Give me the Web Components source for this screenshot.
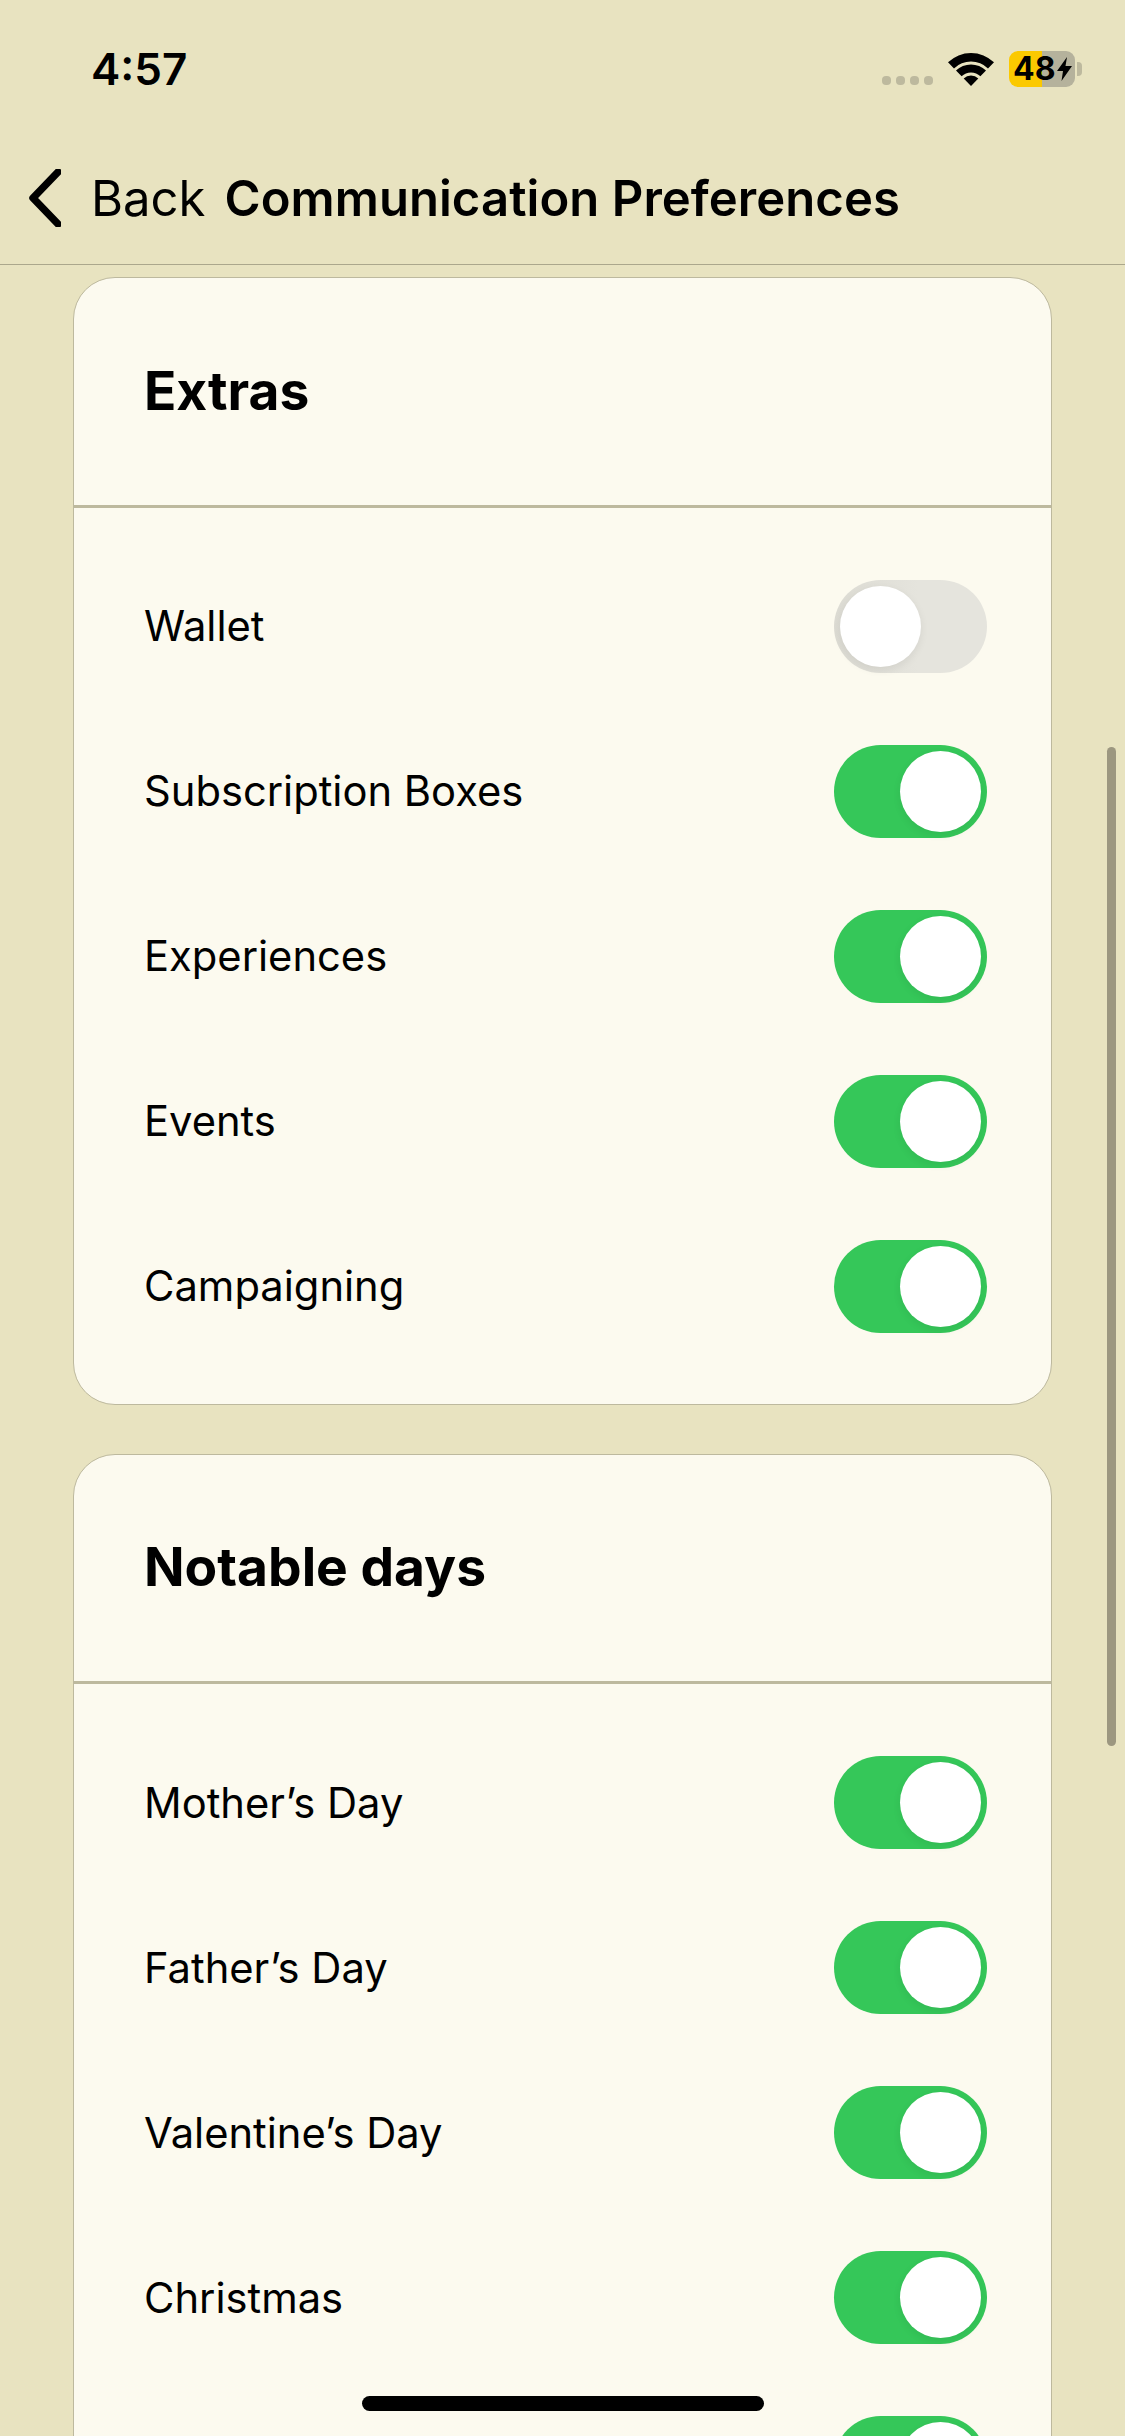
<!DOCTYPE html>
<html>
<head>
<meta charset="utf-8">
<title>Communication Preferences</title>
<style>
    html, body { margin: 0; height: 100%; overflow: hidden; }
    body { background: #e8e3c0; font-family: Inter, "Liberation Sans", sans-serif; color: #000; }
</style>
</head>
<body>
<app-screen>
    <status-bar slot="top"></status-bar>
    <nav-bar slot="top" back="Back">Communication Preferences</nav-bar>
    <pref-card title="Extras">
        <pref-row off>Wallet</pref-row>
        <pref-row>Subscription Boxes</pref-row>
        <pref-row>Experiences</pref-row>
        <pref-row>Events</pref-row>
        <pref-row>Campaigning</pref-row>
    </pref-card>
    <pref-card title="Notable days">
        <pref-row>Mother’s Day</pref-row>
        <pref-row>Father’s Day</pref-row>
        <pref-row>Valentine’s Day</pref-row>
        <pref-row>Christmas</pref-row>
        <pref-row></pref-row>
    </pref-card>
</app-screen>

<script>
class AppScreen extends HTMLElement {
    constructor() {
        super();
        const shadow = this.attachShadow({ mode: 'open' });
        shadow.innerHTML = `
            <style>
                :host { display: flex; flex-direction: column; position: relative; width: 1125px; height: 2436px; overflow: hidden; }
                .scroll { flex: 1; min-height: 0; overflow: hidden; display: flex; flex-direction: column; gap: 49px; padding: 12px 73px 0; }
                /* overlays */
                .scrollbar { position: absolute; left: 1107px; top: 747px; width: 9px; height: 999px; border-radius: 5px; background: #9c9780; }
                .home { position: absolute; left: 362px; top: 2396px; width: 402px; height: 15px; border-radius: 8px; background: #000; }
            </style>
            <slot name="top"></slot>
            <div class="scroll"><slot></slot></div>
            <div class="scrollbar"></div>
            <div class="home"></div>
        `;
    }
}

class StatusBar extends HTMLElement {
    constructor() {
        super();
        const shadow = this.attachShadow({ mode: 'open' });
        shadow.innerHTML = `
            <style>
                :host { display: flex; align-items: center; height: 138px; padding: 0 43px 0 91px; box-sizing: border-box; }
                .time { flex: 1; font-size: 44px; font-weight: 600; }
                .dots { display: flex; gap: 5px; margin-top: 22px; margin-right: 15px; margin-left: -2px; }
                .dots i { width: 9px; height: 9px; border-radius: 4px; background: #bdb99e; }
                svg { display: block; }
                .wifi { margin-right: 15px; margin-top: -1px; }
                .battery { display: flex; align-items: center; width: 66px; height: 36px; border-radius: 9px; background: linear-gradient(90deg, #fbc900 50%, #b5b29c 50%); font-size: 32px; font-weight: 700; line-height: 36px; padding-left: 4px; box-sizing: border-box; }
                .battery svg { margin-left: 2px; flex: none; }
                .nub { width: 5px; height: 14px; margin-left: 2px; border-radius: 0 4px 4px 0; background: #bdb99e; }
            </style>
            <span class="time">4:57</span>
            <span class="dots"><i></i><i></i><i></i><i></i></span>
            <svg class="wifi" width="46" height="34" viewBox="0 0 46 34">
                <path d="M0 10.300A33 33 0 0 1 46 10.300L40 16.400A24.500 24.500 0 0 0 6 16.400Z" fill="#000"/>
                <path d="M8 18.500A21.500 21.500 0 0 1 38 18.500L32.400 24.300A13.500 13.500 0 0 0 13.600 24.300Z" fill="#000"/>
                <path d="M15.700 26.400A10.500 10.500 0 0 1 30.300 26.400L23 34Z" fill="#000"/>
            </svg>
            <span class="battery"><span>48</span><svg width="15" height="24" viewBox="0 0 15 24"><path d="M10 0L0 14H6L4.500 24L15 9H8.500Z" fill="#000"/></svg></span>
            <span class="nub"></span>
        `;
    }
}

class NavBar extends HTMLElement {
    constructor() {
        super();
        const shadow = this.attachShadow({ mode: 'open' });
        shadow.innerHTML = `
            <style>
                :host { display: flex; align-items: center; height: 127px; box-sizing: border-box; border-bottom: 1.5px solid #aba78c; padding: 0 0 6px 29px; }
                svg { display: block; margin-right: 30px; }
                .back { font-size: 49px; font-weight: 400; margin-right: 19px; }
                .title { font-size: 49px; font-weight: 600; letter-spacing: .06px; white-space: nowrap; }
            </style>
            <svg width="32" height="58" viewBox="0 0 32 58"><path d="M29 3L4 29L29 55" fill="none" stroke="#000" stroke-width="7.500" stroke-linecap="round" stroke-linejoin="round"/></svg>
            <span class="back"></span>
            <span class="title"><slot></slot></span>
        `;
        shadow.querySelector('.back').textContent = this.getAttribute('back');
    }
}

class PrefCard extends HTMLElement {
    constructor() {
        super();
        const shadow = this.attachShadow({ mode: 'open' });
        shadow.innerHTML = `
            <style>
                :host { display: block; flex: none; background: #fcfaef; border: 1.5px solid #bdb99e; border-radius: 42px; box-sizing: border-box; }
                header { display: flex; align-items: center; height: 229.5px; box-sizing: border-box; padding: 0 0 2px 70px; border-bottom: 3px solid #bdb99e; font-size: 53.3px; font-weight: 700; }
                .rows { display: flex; flex-direction: column; padding: 36px 0 35px; }
            </style>
            <header></header>
            <div class="rows"><slot></slot></div>
        `;
        shadow.querySelector('header').textContent = this.getAttribute('title');
    }
}

class PrefRow extends HTMLElement {
    constructor() {
        super();
        const shadow = this.attachShadow({ mode: 'open' });
        shadow.innerHTML = `
            <style>
                :host { display: flex; align-items: center; justify-content: space-between; height: 165px; padding: 0 64px 0 70px; font-size: 41.7px; font-weight: 400; }
                toggle-switch { margin-left: auto; }
            </style>
            <slot></slot>
            <toggle-switch></toggle-switch>
        `;
        if (this.hasAttribute('off')) shadow.querySelector('toggle-switch').setAttribute('off', '');
    }
}

class ToggleSwitch extends HTMLElement {
    constructor() {
        super();
        const shadow = this.attachShadow({ mode: 'open' });
        shadow.innerHTML = `
            <style>
                :host { display: flex; align-items: center; justify-content: flex-end; width: 153px; height: 93px; padding: 6px; box-sizing: border-box; border-radius: 47px; background: #35c759; }
                :host([off]) { justify-content: flex-start; background: linear-gradient(90deg, #dcdbd3, #e5e4dd 55%); }
                .thumb { width: 81px; height: 81px; border-radius: 50%; background: #fff; box-shadow: 0 3px 8px rgba(0,0,0,.07); }
            </style>
            <div class="thumb"></div>
        `;
    }
}

customElements.define('toggle-switch', ToggleSwitch);
customElements.define('pref-row', PrefRow);
customElements.define('pref-card', PrefCard);
customElements.define('nav-bar', NavBar);
customElements.define('status-bar', StatusBar);
customElements.define('app-screen', AppScreen);
</script>
</body>
</html>
